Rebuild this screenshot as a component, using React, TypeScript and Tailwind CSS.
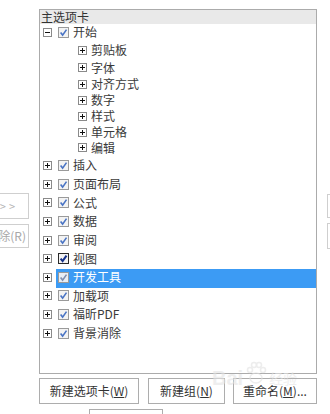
import React from "react";

type Row = {
  label: string;
  sub?: boolean;
  open?: boolean;
  h: string;
  selected?: boolean;
  strong?: boolean;
};

// row heights follow the reference's uneven spacing
const rows: Row[] = [
  { label: "开始", open: true, h: "h-[19px]" },
  { label: "剪贴板", sub: true, h: "h-[18px]" },
  { label: "字体", sub: true, h: "h-[17px]" },
  { label: "对齐方式", sub: true, h: "h-[16px]" },
  { label: "数字", sub: true, h: "h-[16px]" },
  { label: "样式", sub: true, h: "h-[16px]" },
  { label: "单元格", sub: true, h: "h-[16px]" },
  { label: "编辑", sub: true, h: "h-[15px]" },
  { label: "插入", h: "h-[19px]" },
  { label: "页面布局", h: "h-[19px]" },
  { label: "公式", h: "h-[18px]" },
  { label: "数据", h: "h-[19px]" },
  { label: "审阅", h: "h-[19px]" },
  { label: "视图", h: "h-[18px]", strong: true },
  { label: "开发工具", h: "h-[19px]", selected: true },
  { label: "加载项", h: "h-[18px]" },
  { label: "福昕PDF", h: "h-[19px]" },
  { label: "背景消除", h: "h-[19px]" },
];

const ExpandBox = ({ open }: { open?: boolean }) => (
  <svg width="9" height="9" viewBox="0 0 9 9" className="shrink-0">
    <rect x="0.5" y="0.5" width="8" height="8" fill="#fff" stroke="#8a8a8a" />
    <path d="M2 4.5 H7" stroke="#111" strokeWidth="1" />
    {!open && <path d="M4.5 2 V7" stroke="#111" strokeWidth="1" />}
  </svg>
);

const CheckBox = ({ strong, selected }: { strong?: boolean; selected?: boolean }) => (
  <svg width="11" height="11" viewBox="0 0 11 11" className="shrink-0">
    <rect
      x="0.5"
      y="0.5"
      width="10"
      height="10"
      fill={selected ? "#e9eef5" : "#f3f3f3"}
      stroke={strong ? "#2b2b2b" : "#9a9a9a"}
    />
    <path
      d="M2.6 5.6 L4.6 8.1 L8.5 2.6"
      fill="none"
      stroke={strong ? "#14308a" : selected ? "#7f8fb0" : "#4a74c4"}
      strokeWidth={strong ? 2 : 1.6}
    />
  </svg>
);

const Btn = ({ children, className }: { children: React.ReactNode; className: string }) => (
  <div
    className={`flex items-center justify-center shrink-0 border border-[#adadad] bg-white text-[12px] leading-none text-[#333] ${className}`}
  >
    {children}
  </div>
);

const App = () => {
  return (
    <div className="relative w-[330px] h-[414px] overflow-hidden bg-white font-['Noto_Sans_CJK_SC',sans-serif]">
      <div className="flex items-start pt-[9px]">
        {/* left side buttons, cut by window edge */}
        <div className="w-[39px] shrink-0 flex flex-col">
          <div className="-ml-[31px] mt-[184px] w-[60px] h-[26px] border border-[#cfcfcf] flex items-center justify-end pr-[10px] text-[11px] leading-none text-[#b5b5b5] tracking-[3px]">
            &gt;&gt;
          </div>
          <div className="-ml-[31px] mt-[5px] w-[60px] h-[24px] border border-[#cfcfcf] flex items-center justify-end pr-[2px] text-[12px] leading-none text-[#a8a8a8]">
            删除(R)
          </div>
        </div>

        {/* main tab tree */}
        <div className="w-[278px] h-[365px] shrink-0 border border-[#ababab] flex flex-col">
          <div className="h-[14px] bg-[#e9e9e9] flex items-center pl-[1px] text-[12px] leading-none text-[#333]">
            主选项卡
          </div>
          {rows.map((r) =>
            r.sub ? (
              <div key={r.label} className={`${r.h} flex items-center pb-[4px] pl-[38px]`}>
                <ExpandBox />
                <span className="ml-[4px] text-[12px] leading-none text-[#3a3a3a]">{r.label}</span>
              </div>
            ) : (
              <div key={r.label} className={`${r.h} flex items-center`}>
                <div className="ml-[3px] mb-[3px] flex">
                  <ExpandBox open={r.open} />
                </div>
                <div
                  className={`ml-[4px] flex-1 h-full flex items-center pb-[3px] pl-[2px] ${
                    r.selected ? "bg-[#3c9bf4]" : ""
                  }`}
                >
                  <CheckBox strong={r.strong} selected={r.selected} />
                  <span
                    className={`ml-[4px] text-[12px] leading-none ${
                      r.selected ? "text-white" : "text-[#3a3a3a]"
                    }`}
                  >
                    {r.label}
                  </span>
                </div>
              </div>
            )
          )}
        </div>

        {/* right side buttons, cut by window edge */}
        <div className="ml-[10px] flex flex-col">
          <div className="mt-[185px] w-[40px] h-[24px] border border-[#cfcfcf]" />
          <div className="mt-[5px] w-[40px] h-[26px] border border-[#cfcfcf]" />
        </div>
      </div>

      {/* bottom buttons */}
      <div className="flex pl-[39px] mt-[4px]">
        <Btn className="w-[100px] h-[26px]">
          新建选项卡(<span className="underline">W</span>)
        </Btn>
        <Btn className="ml-[9px] w-[77px] h-[26px]">
          新建组(<span className="underline">N</span>)
        </Btn>
        <Btn className="ml-[8px] w-[84px] h-[26px]">
          重命名(<span className="underline">M</span>)...
        </Btn>
      </div>
      <div className="ml-[89px] mt-[5px] w-[74px] h-[20px] border border-[#adadad]" />

      {/* faint watermark */}
      <div className="absolute left-[212px] top-[360px] flex items-end gap-[2px] opacity-60 pointer-events-none">
        <span className="text-[20px] leading-none font-['Liberation_Sans',sans-serif] font-bold text-[#e4e4e4]">
          Bai
        </span>
        <svg width="22" height="26" viewBox="0 0 22 26" className="mb-[2px]">
          <g fill="none" stroke="#e2e2e2" strokeWidth="1.5">
            <ellipse cx="11" cy="18" rx="6" ry="5" />
            <circle cx="5" cy="10" r="2.5" />
            <circle cx="9" cy="5" r="2.5" />
            <circle cx="14" cy="5" r="2.5" />
            <circle cx="18" cy="10" r="2.5" />
          </g>
        </svg>
        <span className="text-[14px] leading-none text-[#e4e4e4] mb-[3px]">经验</span>
      </div>
    </div>
  );
};

export default App;
